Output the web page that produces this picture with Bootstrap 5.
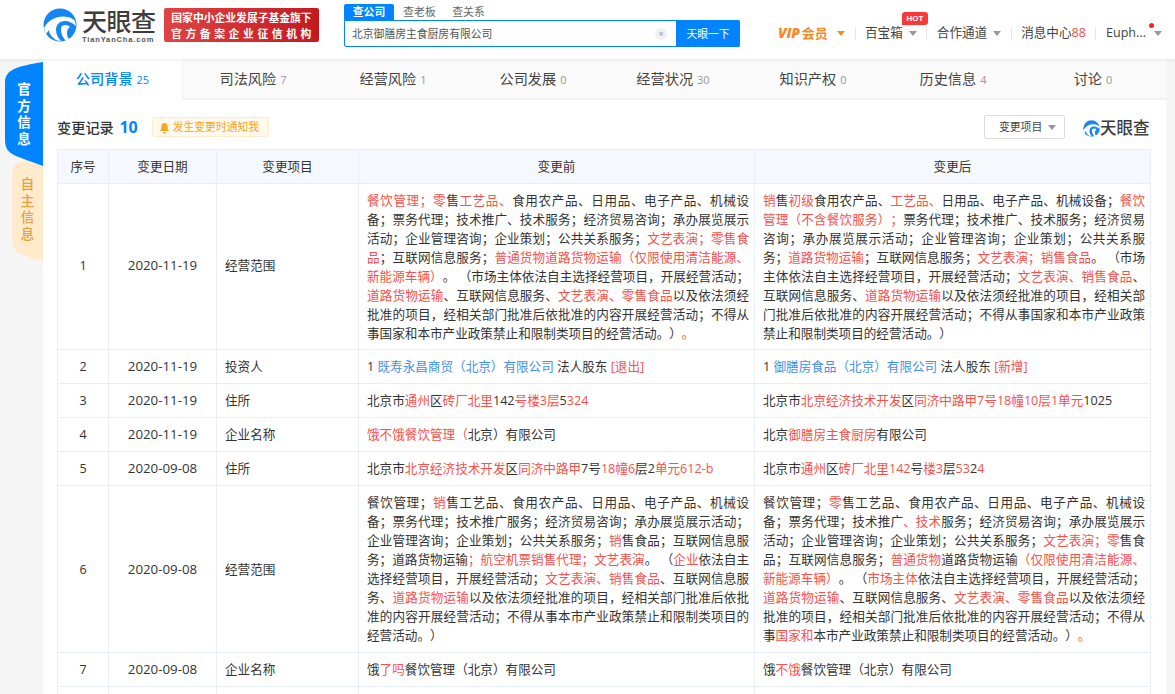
<!DOCTYPE html>
<html lang="zh-CN">
<head>
<meta charset="utf-8">
<title>变更记录</title>
<link href="https://cdn.jsdelivr.net/npm/bootstrap@5.3.0/dist/css/bootstrap.min.css" rel="stylesheet">
<style>
html,body{height:694px;overflow:hidden}
body{background:#f5f5f5;color:#333;font-family:"Open Sans","Noto Sans CJK SC",sans-serif;font-size:12.6px;line-height:19px;text-spacing-trim:space-all}
.topbar{height:59px;background:#fff;box-shadow:0 1px 4px rgba(0,0,0,.08);position:relative;z-index:3}
.brand-mark{width:34px;height:34px;margin-left:43px;flex:none}
.brand-txt{width:75px;margin-left:5px;flex:none}
.brand-cn{font-size:25px;line-height:27px;font-weight:500;color:#3d3d3d;letter-spacing:-.5px}
.brand-en{font-size:7.5px;line-height:9px;font-weight:700;color:#555;letter-spacing:.85px;font-family:"Liberation Sans",sans-serif;white-space:nowrap}
.redbox{width:155px;height:34px;margin-left:7px;background:linear-gradient(90deg,#df4343,#c5191f);border-radius:2px;color:#fff;font-weight:700;font-size:10.8px;line-height:15.5px;padding:2px 0;text-align:center;flex:none;white-space:nowrap}
.redbox div+div{letter-spacing:3.6px;padding-left:3px}
.searchwrap{width:396px;margin-left:25px;margin-top:4px;flex:none}
.stabs{height:16px;font-size:10.8px;line-height:16px;color:#666}
.stab{width:33px;margin-right:16px;text-align:center;white-space:nowrap}
.stab-on{width:50px;margin-right:9px;background:#0084ff;color:#fff;font-weight:700;border-radius:2px 2px 0 0}
.sbox{height:27px;border:1px solid #0084ff;border-radius:0 2px 2px 2px;background:#fff}
.sval{font-size:10.8px;line-height:25px;color:#555;padding-left:7px}
.sclear{width:12px;height:12px;border-radius:50%;background:#f0f0f0;color:#999;font-size:9px;line-height:12px;text-align:center;margin-right:9px}
.sbtn{width:64px;height:27px;margin:-1px -1px -1px 0;background:#0084ff;color:#fff;font-size:10.8px;line-height:27px;text-align:center;border-radius:0 2px 2px 0}
.navr{margin-left:38px;margin-top:25px;height:16px;line-height:16px;color:#444;flex:none}
.vip{color:#fa8728;font-weight:700;font-size:13px;width:53px;white-space:nowrap}
.vip i{font-size:14px;font-weight:800;letter-spacing:-.2px;margin-right:2px}
.tri{width:0;height:0;border-left:4px solid transparent;border-right:4px solid transparent;border-top:5px solid #999;margin-left:6px;flex:none}
.tri-o{border-top-color:#fa8728}
.tri-e{margin-left:8px}
.vsep{width:1px;height:13px;background:#e5e5e5;flex:none;margin:0 9.5px}
.hotb{position:absolute;left:37px;top:-13px;width:26px;height:13px;background:#f93838;color:#fff;font-size:8px;line-height:13px;font-weight:700;text-align:center;border-radius:3px 3px 3px 0;font-family:"Liberation Sans",sans-serif}
.reddot{position:absolute;left:43px;top:-2px;width:5px;height:5px;border-radius:50%;background:#f5222d}
.num-red{color:#f8504c}
.bodyrow{height:635px;overflow:hidden}
.sidecol{width:43px;flex:none;padding-top:3px}
.sidetab{position:relative;width:38px;height:100px;margin-left:5px;text-align:center;font-weight:700;font-size:13.5px;line-height:16.7px}
.sidetab svg{position:absolute;left:0;top:0}
.sidetab span{position:relative;display:block}
.tab-blue{color:#fff;padding-top:19px;z-index:2}
.tab-cream{color:#e5a13d;font-weight:500;padding:14px 0 0 7px}
.mainpanel{width:1123px;background:#fff;flex:none}
.mtabs{height:41px;border-bottom:2px solid #f2f2f2;background:#fafafa}
.mtab{width:140px;text-align:center;font-size:14.2px;line-height:40px;color:#444;white-space:nowrap;flex:none}
.mtab small{font-size:11px;color:#999;margin-left:4px}
.mtab-on{background:#fff;color:#0084ff;font-weight:500;height:41px;border-right:1px solid #f2f2f2;margin-bottom:-2px}
.mtab-on small{color:#0084ff}
.headrow{padding:16px 16px 0 14px;height:49px}
.ttl{font-size:14.2px;line-height:22px;font-weight:500;color:#333}
.ttl b{font-size:16px;color:#0084ff;font-weight:700;margin-left:2px}
.notif{height:20px;width:117px;margin-left:14px;margin-top:1px;background:#fff8ec;border:1px solid #fdeccd;border-radius:2px;color:#f5a623;font-size:10.8px;line-height:18px;padding-left:7px;white-space:nowrap}
.pick{width:81px;height:24px;margin-top:-1px;border:1px solid #ddd;border-radius:2px;color:#444;font-size:10.8px;line-height:22px;padding-left:14px}
.mini{width:67px;height:20px;margin-left:18px;margin-top:2px;color:#3d3d3d;font-weight:500;font-size:16.5px;line-height:20px;white-space:nowrap}
.chgtbl{table-layout:fixed;width:1093px;margin-left:14px;border-collapse:collapse;font-size:12.6px;line-height:19px;color:#333}
.chgtbl th,.chgtbl td{border:1px solid #e6eff7;padding:7px 5px 7px 8px;vertical-align:middle;font-weight:400;background:#fff}
.chgtbl th{background:#f5f9fd;text-align:center;height:34px;padding:7px}
.chgtbl td.cc{text-align:center;padding:7px 4px}
.chgtbl td.dt{font-size:13.3px}
.chgtbl td.txt{text-align:justify}
.row-a td.txt{padding-bottom:6px}
.row-a td.cc,.row-a td.lab{padding-bottom:8px;padding-top:6px}
.hl{color:#f8504c}
.lk{color:#3f8fe8}
</style>
</head>
<body>
<header class="topbar d-flex">
  <svg class="brand-mark mt-2" viewBox="0 0 34 34">
    <circle cx="17" cy="17" r="16.5" fill="#1487f5"/>
    <path d="M1 20C6 11 15 7 25 9c3 .6 5 2 7 4l1 5c-3-3-7-5-11-5-6 0-9 4-9 9 0 4 2 8 5 11l-4-.5C8 29 6 25 6 22l-3 4z" fill="#fff"/>
    <path d="M19 18c3-2 6-1 8 1-2 1-3 3-3 6 0 3 1 5 2 6l-3 2c-3-3-5-7-5-11 0-2 0-3 1-4z" fill="#fff"/>
  </svg>
  <div class="brand-txt mt-2">
    <div class="brand-cn">天眼查</div>
    <div class="brand-en">TianYanCha.com</div>
  </div>
  <div class="redbox mt-2"><div>国家中小企业发展子基金旗下</div><div>官方备案企业征信机构</div></div>
  <div class="searchwrap">
    <div class="stabs d-flex"><div class="stab stab-on">查公司</div><div class="stab">查老板</div><div class="stab">查关系</div></div>
    <div class="sbox d-flex align-items-center">
      <div class="sval flex-grow-1">北京御膳房主食厨房有限公司</div>
      <div class="sclear">×</div>
      <div class="sbtn">天眼一下</div>
    </div>
  </div>
  <div class="navr d-flex align-items-center">
    <span class="vip"><i>VIP</i>会员</span><span class="tri tri-o"></span><span class="vsep"></span>
    <span class="position-relative d-flex align-items-center"><span>百宝箱</span><span class="tri"></span><span class="hotb">HOT</span></span>
    <span class="vsep"></span>
    <span class="d-flex align-items-center"><span>合作通道</span><span class="tri"></span></span>
    <span class="vsep"></span>
    <span class="text-nowrap">消息中心<span class="num-red">88</span></span>
    <span class="vsep"></span>
    <span class="position-relative d-flex align-items-center"><span>Euph...</span><span class="tri tri-e"></span><span class="reddot"></span></span>
  </div>
</header>
<div class="bodyrow d-flex">
  <aside class="sidecol">
    <div class="sidetab tab-blue">
      <svg width="38" height="106" viewBox="0 0 38 106"><path d="M38 0C26 2 15 4 9 7 3 10 0 14 0 20V78C0 86 3 90 9 93 16 96 27 100 38 104Z" fill="#0084ff"/></svg>
      <span>官<br>方<br>信<br>息</span>
    </div>
    <div class="sidetab tab-cream">
      <svg width="38" height="100" viewBox="0 0 38 100"><path d="M38 4C30 1 22 0 16 0 10 1 7 5 7 11V77C7 86 11 90 16 92 22 95 30 97 38 99Z" fill="#ffebcb"/></svg>
      <span>自<br>主<br>信<br>息</span>
    </div>
  </aside>
  <main class="mainpanel">
    <nav class="mtabs d-flex">
      <div class="mtab mtab-on">公司背景<small>25</small></div>
      <div class="mtab">司法风险<small>7</small></div>
      <div class="mtab">经营风险<small>1</small></div>
      <div class="mtab">公司发展<small>0</small></div>
      <div class="mtab">经营状况<small>30</small></div>
      <div class="mtab">知识产权<small>0</small></div>
      <div class="mtab">历史信息<small>4</small></div>
      <div class="mtab">讨论<small>0</small></div>
    </nav>
    <div class="headrow d-flex">
      <div class="ttl">变更记录 <b>10</b></div>
      <div class="notif"><svg width="9" height="11" viewBox="0 0 9 11" class="me-1"><path d="M4.5 0C2.4 0 1.3 1.6 1.3 3.6V6L0 8h9L7.7 6V3.6C7.7 1.6 6.6 0 4.5 0zM3 9a1.5 1.5 0 0 0 3 0z" fill="#f5a623"/></svg>发生变更时通知我</div>
      <div class="ms-auto d-flex align-items-start">
        <div class="pick d-flex align-items-center">变更项目<span class="tri"></span></div>
        <div class="mini d-flex align-items-center"><svg width="17" height="17" viewBox="0 0 34 34"><circle cx="17" cy="17" r="16.5" fill="#1487f5"/><path d="M1 20C6 11 15 7 25 9c3 .6 5 2 7 4l1 5c-3-3-7-5-11-5-6 0-9 4-9 9 0 4 2 8 5 11l-4-.5C8 29 6 25 6 22l-3 4z" fill="#fff"/><path d="M19 18c3-2 6-1 8 1-2 1-3 3-3 6 0 3 1 5 2 6l-3 2c-3-3-5-7-5-11 0-2 0-3 1-4z" fill="#fff"/></svg>天眼查</div>
      </div>
    </div>
    <table class="chgtbl">
      <colgroup><col style="width:51px"><col style="width:108px"><col style="width:142px"><col style="width:396px"><col style="width:396px"></colgroup>
      <thead><tr><th>序号</th><th>变更日期</th><th>变更项目</th><th>变更前</th><th>变更后</th></tr></thead>
      <tbody>
        <tr class="row-a"><td class="cc">1</td><td class="cc dt">2020-11-19</td><td class="lab">经营范围</td>
          <td class="txt"><span class="hl">餐饮管理；零</span>售<span class="hl">工艺品、</span>食用农产品、日用品、电子产品、机械设备；票务代理；技术推广、技术服务；经济贸易咨询；承办展览展示活动；企业管理咨询；企业策划；公共关系服务；<span class="hl">文艺表演；零售食品</span>；互联网信息服务；<span class="hl">普通货物道路货物运输（仅限使用清洁能源、新能源车辆）</span>。 （市场主体依法自主选择经营项目，开展经营活动；<span class="hl">道路货物运输</span>、互联网信息服务、<span class="hl">文艺表演、零售食品</span>以及依法须经批准的项目，经相关部门批准后依批准的内容开展经营活动；不得从事国家和本市产业政策禁止和限制类项目的经营活动。）<span class="hl">。</span></td>
          <td class="txt"><span class="hl">销</span>售<span class="hl">初级</span>食用农产品、<span class="hl">工艺品、</span>日用品、电子产品、机械设备；<span class="hl">餐饮管理（不含餐饮服务）；</span>票务代理；技术推广、技术服务；经济贸易咨询；承办展览展示活动；企业管理咨询；企业策划；公共关系服务；<span class="hl">道路货物运输</span>；互联网信息服务；<span class="hl">文艺表演；销售食品</span>。 （市场主体依法自主选择经营项目，开展经营活动；<span class="hl">文艺表演、销售食品</span>、互联网信息服务、<span class="hl">道路货物运输</span>以及依法须经批准的项目，经相关部门批准后依批准的内容开展经营活动；不得从事国家和本市产业政策禁止和限制类项目的经营活动。）</td></tr>
        <tr><td class="cc">2</td><td class="cc dt">2020-11-19</td><td>投资人</td>
          <td>1 <span class="lk">既寿永昌商贸（北京）有限公司</span> 法人股东 <span class="hl">[退出]</span></td>
          <td>1 <span class="lk">御膳房食品（北京）有限公司</span> 法人股东 <span class="hl">[新增]</span></td></tr>
        <tr><td class="cc">3</td><td class="cc dt">2020-11-19</td><td>住所</td>
          <td>北京市<span class="hl">通州</span>区<span class="hl">砖厂北里</span>142<span class="hl">号楼3层</span>5<span class="hl">324</span></td>
          <td>北京市<span class="hl">北京经济技术开发</span>区<span class="hl">同济中路甲7号18幢10层1单元</span>1025</td></tr>
        <tr><td class="cc">4</td><td class="cc dt">2020-11-19</td><td>企业名称</td>
          <td><span class="hl">饿不饿餐饮管理（</span>北京）有限公司</td>
          <td>北京<span class="hl">御膳房主食厨房</span>有限公司</td></tr>
        <tr><td class="cc">5</td><td class="cc dt">2020-09-08</td><td>住所</td>
          <td>北京市<span class="hl">北京经济技术开发</span>区<span class="hl">同济中路甲</span>7号<span class="hl">18幢6</span>层2<span class="hl">单元612-b</span></td>
          <td>北京市<span class="hl">通州</span>区<span class="hl">砖厂北里142</span>号<span class="hl">楼3</span>层<span class="hl">53</span>2<span class="hl">4</span></td></tr>
        <tr><td class="cc">6</td><td class="cc dt">2020-09-08</td><td>经营范围</td>
          <td class="txt">餐饮管理；<span class="hl">销</span>售工艺品、食用农产品、日用品、电子产品、机械设备；票务代理；技术推广服务；经济贸易咨询；承办展览展示活动；企业管理咨询；企业策划；公共关系服务；<span class="hl">销</span>售食品；互联网信息服务；道路货物运输<span class="hl">；航空机票销售代理；文艺表演</span>。 （<span class="hl">企业</span>依法自主选择经营项目，开展经营活动；<span class="hl">文艺表演、销售食品</span>、互联网信息服务、<span class="hl">道路货物运输</span>以及依法须经批准的项目，经相关部门批准后依批准的内容开展经营活动；不得从事本市产业政策禁止和限制类项目的经营活动。）</td>
          <td class="txt">餐饮管理；<span class="hl">零</span>售工艺品、食用农产品、日用品、电子产品、机械设备；票务代理；技术推广<span class="hl">、技术</span>服务；经济贸易咨询；承办展览展示活动；企业管理咨询；企业策划；公共关系服务；<span class="hl">文艺表演；零</span>售食品；互联网信息服务；<span class="hl">普通货物</span>道路货物运输<span class="hl">（仅限使用清洁能源、新能源车辆）</span>。 （<span class="hl">市场主体</span>依法自主选择经营项目，开展经营活动；<span class="hl">道路货物运输</span>、互联网信息服务、<span class="hl">文艺表演、零售食品</span>以及依法须经批准的项目，经相关部门批准后依批准的内容开展经营活动；不得从事<span class="hl">国家和</span>本市产业政策禁止和限制类项目的经营活动。）<span class="hl">。</span></td></tr>
        <tr><td class="cc">7</td><td class="cc dt">2020-09-08</td><td>企业名称</td>
          <td>饿<span class="hl">了吗</span>餐饮管理（北京）有限公司</td>
          <td>饿<span class="hl">不饿</span>餐饮管理（北京）有限公司</td></tr>
        <tr><td>&nbsp;</td><td></td><td></td><td></td><td></td></tr>
      </tbody>
    </table>
  </main>
</div>
<script src="https://cdn.jsdelivr.net/npm/bootstrap@5.3.0/dist/js/bootstrap.bundle.min.js"></script>
</body>
</html>
